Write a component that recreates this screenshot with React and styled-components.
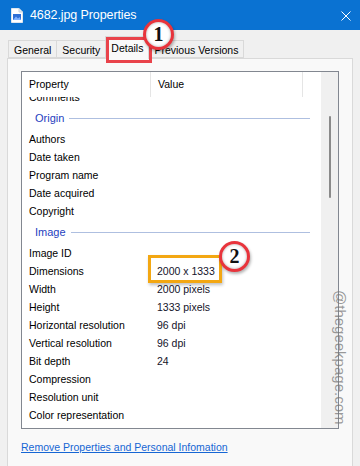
import React from "react";
import styled, { createGlobalStyle } from "styled-components";

const GlobalStyle = createGlobalStyle`
  html, body {
    margin: 0;
    padding: 0;
    background: #f0f0f0;
  }
  body {
    font-family: "Liberation Sans", Arial, sans-serif;
  }
`;

const rows = [
  { type: "row", name: "Comments" },
  { type: "group", name: "Origin" },
  { type: "row", name: "Authors" },
  { type: "row", name: "Date taken" },
  { type: "row", name: "Program name" },
  { type: "row", name: "Date acquired" },
  { type: "row", name: "Copyright" },
  { type: "group", name: "Image" },
  { type: "row", name: "Image ID" },
  { type: "row", name: "Dimensions", value: "2000 x 1333" },
  { type: "row", name: "Width", value: "2000 pixels" },
  { type: "row", name: "Height", value: "1333 pixels" },
  { type: "row", name: "Horizontal resolution", value: "96 dpi" },
  { type: "row", name: "Vertical resolution", value: "96 dpi" },
  { type: "row", name: "Bit depth", value: "24" },
  { type: "row", name: "Compression" },
  { type: "row", name: "Resolution unit" },
  { type: "row", name: "Color representation" },
];

const tabs = ["General", "Security", "Details", "Previous Versions"];

const FileIcon = () => (
  <svg width="12" height="15" viewBox="0 0 12 15">
    <path d="M0.5 0.5 H8 L11.5 4 V14.5 H0.5 Z" fill="#ffffff" stroke="#dfe6ee" />
    <path d="M8 0.5 V4 H11.5" fill="#e6ebf0" stroke="#c8d0da" />
    <rect x="2" y="6" width="8" height="6" fill="#2f6fd6" />
    <path d="M2 12 L5 8.5 L7 10.5 L8.5 9 L10 12 Z" fill="#7fb2ff" />
  </svg>
);

const CloseIcon = () => (
  <svg width="10" height="10" viewBox="0 0 10 10">
    <path d="M0.5 0.5 L9.5 9.5 M9.5 0.5 L0.5 9.5" stroke="#ffffff" strokeWidth="1" />
  </svg>
);

const App = () => {
  return (
    <>
      <GlobalStyle />
      <Window>
        <TitleBar>
          <FileIcon />
          <Title>4682.jpg Properties</Title>
          <Close>
            <CloseIcon />
          </Close>
        </TitleBar>
        <TabStrip>
          {tabs.map((t) => (
            <Tab key={t} $active={t === "Details"}>
              {t}
            </Tab>
          ))}
        </TabStrip>
        <Panel>
          <ListBox>
            <ListMain>
              <Header>
                <HeadCell $w={129}>Property</HeadCell>
                <HeadCell $w={152}>Value</HeadCell>
              </Header>
              <Body>
                <Scrolled>
                  {rows.map((r) =>
                    r.type === "group" ? (
                      <Group key={r.name}>
                        <GroupLabel>{r.name}</GroupLabel>
                        <GroupLine />
                      </Group>
                    ) : (
                      <Row key={r.name}>
                        <NameCell>{r.name}</NameCell>
                        <ValueCell>{r.value || ""}</ValueCell>
                      </Row>
                    )
                  )}
                </Scrolled>
              </Body>
            </ListMain>
            <ScrollBar>
              <Thumb />
            </ScrollBar>
          </ListBox>
          <Link href="#">Remove Properties and Personal Infomation</Link>
        </Panel>

        <TabHighlight />
        <Badge $x={143} $y={19}>1</Badge>
        <ValueHighlight />
        <Badge $x={219} $y={241}>2</Badge>
        <Watermark>@thegeekpage.com</Watermark>
      </Window>
    </>
  );
};

export default App;

const Window = styled.div`
  position: relative;
  width: 360px;
  height: 466px;
  overflow: hidden;
  background: #f0f0f0;
  display: flex;
  flex-direction: column;
`;

const TitleBar = styled.div`
  height: 30px;
  flex-shrink: 0;
  background: #0a72d2;
  display: flex;
  align-items: center;
  padding: 0 9px 0 11px;
  gap: 7px;
`;

const Title = styled.div`
  color: #ffffff;
  font-size: 12.5px;
  letter-spacing: -0.1px;
`;

const Close = styled.div`
  margin-left: auto;
  display: flex;
  align-items: center;
  padding-top: 1px;
`;

const TabStrip = styled.div`
  height: 28px;
  flex-shrink: 0;
  display: flex;
  align-items: flex-end;
  padding-left: 8px;
  position: relative;
  z-index: 1;
`;

const Tab = styled.div`
  height: ${(p) => (p.$active ? "23px" : "18px")};
  box-sizing: border-box;
  padding: ${(p) => (p.$active ? "5px 5px 0" : "3px 5px 0")};
  margin-bottom: ${(p) => (p.$active ? "-1px" : "0")};
  font-size: 10.5px;
  color: #000;
  background: ${(p) => (p.$active ? "#f9f9f9" : "#f0f0f0")};
  border: 1px solid #d9d9d9;
  border-bottom: ${(p) => (p.$active ? "none" : "1px solid #d9d9d9")};
  margin-right: -1px;
`;

const Panel = styled.div`
  flex: 1;
  margin: 0 7px 0 7px;
  background: #f9f9f9;
  border: 1px solid #d9d9d9;
  border-bottom: none;
  padding: 12px 13px 0 13px;
  display: flex;
  flex-direction: column;
`;

const ListBox = styled.div`
  height: 358px;
  box-sizing: border-box;
  border: 1px solid #828790;
  background: #ffffff;
  display: flex;
`;

const ListMain = styled.div`
  flex: 1;
  display: flex;
  flex-direction: column;
  min-width: 0;
`;

const Header = styled.div`
  height: 25px;
  flex-shrink: 0;
  display: flex;
`;

const HeadCell = styled.div`
  width: ${(p) => p.$w}px;
  box-sizing: border-box;
  padding-left: 7px;
  padding-top: 6px;
  font-size: 10.5px;
  color: #000;
  border-right: 1px solid #e5e5e5;
`;

const Body = styled.div`
  flex: 1;
  overflow: hidden;
`;

const Scrolled = styled.div`
  margin-top: -9px;
`;

const Row = styled.div`
  height: 18px;
  display: flex;
  align-items: center;
  font-size: 10.5px;
`;

const NameCell = styled.div`
  width: 130px;
  padding-left: 7px;
  box-sizing: border-box;
  color: #000;
  white-space: nowrap;
`;

const ValueCell = styled.div`
  padding-left: 5px;
  color: #14142a;
  white-space: nowrap;
`;

const Group = styled.div`
  height: 24px;
  display: flex;
  align-items: center;
  padding-left: 13px;
  padding-right: 11px;
  gap: 5px;
`;

const GroupLabel = styled.div`
  font-size: 11px;
  color: #2541c0;
`;

const GroupLine = styled.div`
  flex: 1;
  height: 1px;
  background: #aebfe0;
`;

const ScrollBar = styled.div`
  width: 17px;
  flex-shrink: 0;
  background: #f0f0f0;
  display: flex;
  justify-content: center;
`;

const Thumb = styled.div`
  width: 2px;
  height: 82px;
  margin-top: 44px;
  border-radius: 1px;
  background: #8a8a8a;
`;

const Link = styled.a`
  margin-top: 12px;
  font-size: 10.5px;
  color: #1666d4;
  text-decoration: underline;
`;

const TabHighlight = styled.div`
  position: absolute;
  left: 106px;
  top: 37px;
  width: 46px;
  height: 26px;
  box-sizing: border-box;
  border: 3px solid #e9434b;
  z-index: 2;
`;

const ValueHighlight = styled.div`
  position: absolute;
  left: 148px;
  top: 255px;
  width: 74px;
  height: 28px;
  box-sizing: border-box;
  border: 3px solid #f3a712;
  box-shadow: 1px 2px 3px rgba(0, 0, 0, 0.25);
`;

const Badge = styled.div`
  position: absolute;
  left: ${(p) => p.$x}px;
  top: ${(p) => p.$y}px;
  width: 31px;
  height: 31px;
  box-sizing: border-box;
  border-radius: 50%;
  border: 3px solid #e8343c;
  background: #ffffff;
  box-shadow: inset 0 0 3px rgba(0, 0, 0, 0.35), 1px 2px 3px rgba(0, 0, 0, 0.3);
  display: flex;
  align-items: center;
  justify-content: center;
  font-family: "Liberation Serif", "Times New Roman", serif;
  font-weight: bold;
  font-size: 20px;
  color: #111;
  z-index: 3;
`;

const Watermark = styled.div`
  position: absolute;
  left: 332px;
  top: 290px;
  writing-mode: vertical-rl;
  font-family: "Liberation Sans", Arial, sans-serif;
  font-size: 15px;
  color: rgba(120, 120, 120, 0.75);
  white-space: nowrap;
`;
